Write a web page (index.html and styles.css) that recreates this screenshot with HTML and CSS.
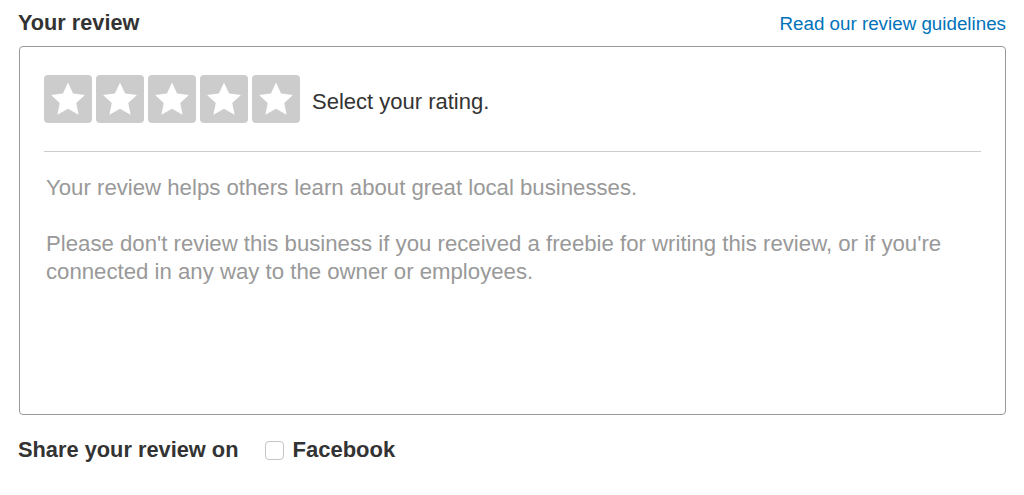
FILE: index.html
```html
<!DOCTYPE html>
<html>
<head>
<meta charset="utf-8">
<link rel="stylesheet" href="styles.css">
</head>
<body>
<div class="page">
  <div class="header">
    <h2 class="title">Your review</h2>
    <a class="guide" href="#">Read our review guidelines</a>
  </div>
  <div class="box">
    <div class="rating">
      <div class="stars">
        <span class="star"><svg viewBox="0 0 24 24" width="38" height="38"><path d="M12 1.6l3.2 6.9 7.5.9-5.5 5.1 1.5 7.4L12 18.2l-6.7 3.7 1.5-7.4L1.3 9.4l7.5-.9z" fill="#fff"/></svg></span>
        <span class="star"><svg viewBox="0 0 24 24" width="38" height="38"><path d="M12 1.6l3.2 6.9 7.5.9-5.5 5.1 1.5 7.4L12 18.2l-6.7 3.7 1.5-7.4L1.3 9.4l7.5-.9z" fill="#fff"/></svg></span>
        <span class="star"><svg viewBox="0 0 24 24" width="38" height="38"><path d="M12 1.6l3.2 6.9 7.5.9-5.5 5.1 1.5 7.4L12 18.2l-6.7 3.7 1.5-7.4L1.3 9.4l7.5-.9z" fill="#fff"/></svg></span>
        <span class="star"><svg viewBox="0 0 24 24" width="38" height="38"><path d="M12 1.6l3.2 6.9 7.5.9-5.5 5.1 1.5 7.4L12 18.2l-6.7 3.7 1.5-7.4L1.3 9.4l7.5-.9z" fill="#fff"/></svg></span>
        <span class="star"><svg viewBox="0 0 24 24" width="38" height="38"><path d="M12 1.6l3.2 6.9 7.5.9-5.5 5.1 1.5 7.4L12 18.2l-6.7 3.7 1.5-7.4L1.3 9.4l7.5-.9z" fill="#fff"/></svg></span>
      </div>
      <span class="select">Select your rating.</span>
    </div>
    <div class="placeholder">
      <p>Your review helps others learn about great local businesses.</p>
      <p>Please don't review this business if you received a freebie for writing this review, or if you're connected in any way to the owner or employees.</p>
    </div>
  </div>
  <div class="share">
    <span class="share-label">Share your review on</span>
    <label class="fb"><span class="check"></span>Facebook</label>
  </div>
</div>
</body>
</html>
```

FILE: styles.css
```css
html, body {
  margin: 0;
  padding: 0;
  background: #fff;
}
body {
  font-family: "Liberation Sans", Arial, sans-serif;
  color: #333;
}
.page {
  width: 988px;
  padding: 10px 18px 0 18px;
}
.header {
  display: flex;
  justify-content: space-between;
  align-items: baseline;
  height: 36px;
}
.title {
  margin: 0;
  font-size: 21.7px;
  font-weight: bold;
  color: #333;
  line-height: 26px;
}
.guide {
  font-size: 18.8px;
  color: #0073bb;
  text-decoration: none;
  line-height: 26px;
}
.box {
  box-sizing: border-box;
  margin-left: 1px;
  border: 1px solid #999;
  border-radius: 4px;
  height: 369px;
  padding: 28px 24px 0 24px;
}
.rating {
  display: flex;
  align-items: center;
  padding-bottom: 28px;
  border-bottom: 1px solid #ccc;
}
.stars {
  display: flex;
  gap: 4px;
}
.star {
  width: 48px;
  height: 48px;
  background: #ccc;
  border-radius: 4px;
  display: flex;
  align-items: center;
  justify-content: center;
}
.star svg {
  display: block;
}
.select {
  margin-left: 12px;
  padding-top: 5px;
  font-size: 22px;
  color: #333;
}
.placeholder {
  padding: 22px 2px 0 2px;
  color: #999;
  font-size: 22.2px;
  line-height: 28px;
}
.placeholder p {
  margin: 0 0 28px 0;
}
.share {
  display: flex;
  align-items: center;
  margin-top: 22px;
}
.share-label {
  font-size: 21.8px;
  font-weight: bold;
  color: #333;
}
.fb {
  display: flex;
  align-items: center;
  margin-left: 27px;
  font-size: 22px;
  font-weight: bold;
  color: #333;
}
.check {
  box-sizing: border-box;
  width: 19px;
  height: 19px;
  border: 1px solid #c4c4c4;
  border-radius: 4px;
  margin-right: 8px;
  background: #fff;
}
```
